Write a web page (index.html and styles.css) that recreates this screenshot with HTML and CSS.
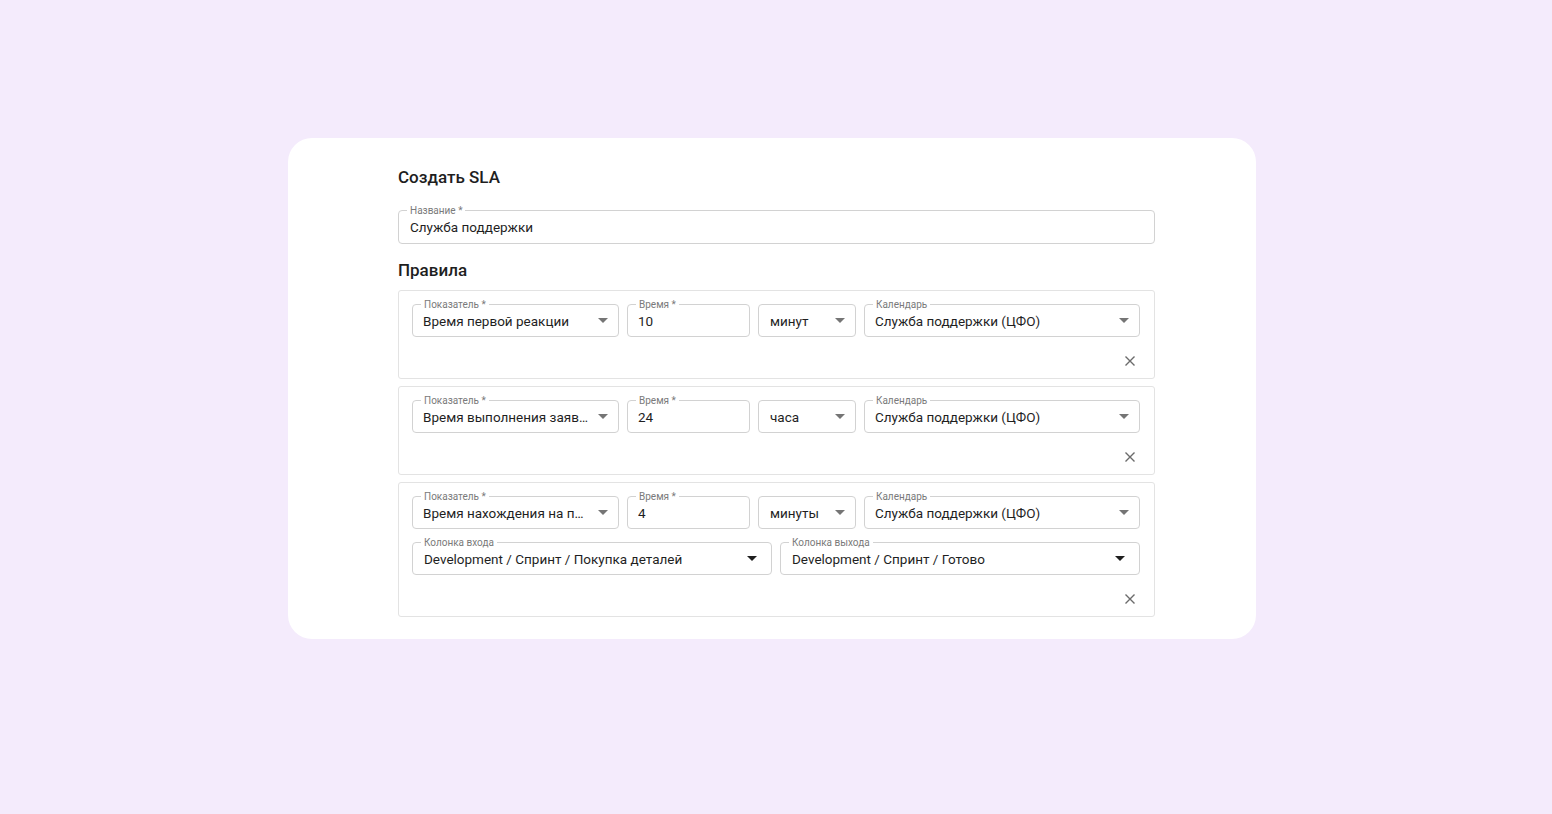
FILE: index.html
```html
<!DOCTYPE html>
<html lang="ru">
<head>
  <meta charset="UTF-8">
  <meta name="viewport" content="width=device-width, initial-scale=1.0">
  <title>Создать SLA</title>
  <link rel="stylesheet" href="styles.css">
</head>
<body>
  <!-- Карточка создания SLA -->
  <div class="card">
    <h2 class="card-title">Создать SLA</h2>

    <div class="field field-name">
      <span class="field-label">Название *</span>
      <span class="field-value">Служба поддержки</span>
    </div>

    <h3 class="section-title">Правила</h3>

    <div class="rules">
      <!-- Правило 1 -->
      <div class="rule">
        <div class="rule-row">
          <div class="field w-metric">
            <span class="field-label">Показатель *</span>
            <span class="field-value">Время первой реакции</span>
            <span class="arrow"></span>
          </div>
          <div class="field w-time">
            <span class="field-label">Время *</span>
            <span class="field-value">10</span>
          </div>
          <div class="field w-unit">
            <span class="field-value">минут</span>
            <span class="arrow"></span>
          </div>
          <div class="field w-calendar">
            <span class="field-label">Календарь</span>
            <span class="field-value">Служба поддержки (ЦФО)</span>
            <span class="arrow"></span>
          </div>
        </div>
        <div class="rule-footer">
          <button class="remove-btn" aria-label="Удалить">
            <svg width="10" height="10" viewBox="0 0 10 10"><path d="M0.5 0.5L9.5 9.5M9.5 0.5L0.5 9.5" /></svg>
          </button>
        </div>
      </div>

      <!-- Правило 2 -->
      <div class="rule">
        <div class="rule-row">
          <div class="field w-metric">
            <span class="field-label">Показатель *</span>
            <span class="field-value">Время выполнения заявки</span>
            <span class="arrow"></span>
          </div>
          <div class="field w-time">
            <span class="field-label">Время *</span>
            <span class="field-value">24</span>
          </div>
          <div class="field w-unit">
            <span class="field-value">часа</span>
            <span class="arrow"></span>
          </div>
          <div class="field w-calendar">
            <span class="field-label">Календарь</span>
            <span class="field-value">Служба поддержки (ЦФО)</span>
            <span class="arrow"></span>
          </div>
        </div>
        <div class="rule-footer">
          <button class="remove-btn" aria-label="Удалить">
            <svg width="10" height="10" viewBox="0 0 10 10"><path d="M0.5 0.5L9.5 9.5M9.5 0.5L0.5 9.5" /></svg>
          </button>
        </div>
      </div>

      <!-- Правило 3 -->
      <div class="rule">
        <div class="rule-row">
          <div class="field w-metric">
            <span class="field-label">Показатель *</span>
            <span class="field-value">Время нахождения на позиции</span>
            <span class="arrow"></span>
          </div>
          <div class="field w-time">
            <span class="field-label">Время *</span>
            <span class="field-value">4</span>
          </div>
          <div class="field w-unit">
            <span class="field-value">минуты</span>
            <span class="arrow"></span>
          </div>
          <div class="field w-calendar">
            <span class="field-label">Календарь</span>
            <span class="field-value">Служба поддержки (ЦФО)</span>
            <span class="arrow"></span>
          </div>
        </div>
        <div class="rule-row rule-row-second">
          <div class="field w-half">
            <span class="field-label">Колонка входа</span>
            <span class="field-value">Development / Спринт / Покупка деталей</span>
            <span class="arrow arrow-dark"></span>
          </div>
          <div class="field w-half">
            <span class="field-label">Колонка выхода</span>
            <span class="field-value">Development / Спринт / Готово</span>
            <span class="arrow arrow-dark"></span>
          </div>
        </div>
        <div class="rule-footer">
          <button class="remove-btn" aria-label="Удалить">
            <svg width="10" height="10" viewBox="0 0 10 10"><path d="M0.5 0.5L9.5 9.5M9.5 0.5L0.5 9.5" /></svg>
          </button>
        </div>
      </div>
    </div>
  </div>
</body>
</html>
```

FILE: styles.css
```css
/* Reset */
* {
  margin: 0;
  padding: 0;
  box-sizing: border-box;
  font-family: Roboto, "Noto Sans", Arial, sans-serif;
}

/* Body */
body {
  background-color: #f4ebfc;
  padding-top: 138px;
  min-height: 100vh;
}

/* Карточка */
.card {
  width: 968px;
  margin-left: 288px;
  background-color: #fff;
  border-radius: 24px;
  padding: 28px 101px 22px 110px;
}

.card-title {
  font-size: 17px;
  font-weight: 500;
  color: #1e1e1e;
  line-height: 22px;
  margin-bottom: 22px;
}

.section-title {
  font-size: 17px;
  font-weight: 500;
  color: #1e1e1e;
  line-height: 22px;
  margin: 15px 0 9px;
}

/* Поле ввода */
.field {
  position: relative;
  display: flex;
  align-items: center;
  height: 33px;
  padding: 0 10px;
  border: 1px solid #d2d2d2;
  border-radius: 4px;
  background-color: #fff;
}

.field-name {
  height: 34px;
  padding: 0 11px;
}

.field-label {
  position: absolute;
  top: -6px;
  left: 8px;
  padding: 0 3px;
  font-size: 10px;
  line-height: 11px;
  color: #7a7a7a;
  background-color: #fff;
}

.field-value {
  flex: 1;
  font-size: 13.5px;
  color: #1f1f1f;
  white-space: nowrap;
  overflow: hidden;
  text-overflow: ellipsis;
}

/* Стрелка выпадающего списка */
.arrow {
  flex: none;
  width: 0;
  height: 0;
  margin-left: 10px;
  border-left: 5px solid transparent;
  border-right: 5px solid transparent;
  border-top: 5px solid #757575;
}

.arrow-dark {
  border-top-color: #1f1f1f;
  margin-right: 3px;
}

/* Правила */
.rules {
  display: flex;
  flex-direction: column;
  gap: 7px;
}

.rule {
  border: 1px solid #e3e3e3;
  border-radius: 3px;
  padding: 13px 14px 5px 13px;
}

.rule-row {
  display: flex;
  gap: 8px;
}

.rule-row-second {
  margin-top: 13px;
}

.w-metric {
  width: 207px;
}

.w-time {
  width: 123px;
}

.w-unit {
  width: 98px;
  padding: 0 10px 0 11px;
}

.w-calendar {
  flex: 1;
}

.w-half {
  flex: 1;
  padding: 0 11px;
}

.rule-footer {
  display: flex;
  justify-content: flex-end;
  margin-top: 12px;
}

.remove-btn {
  display: flex;
  align-items: center;
  justify-content: center;
  width: 24px;
  height: 24px;
  margin-right: -2px;
  border: none;
  background: none;
  cursor: pointer;
}

.remove-btn svg path {
  stroke: #6b6b6b;
  stroke-width: 1.4;
  fill: none;
}
```
